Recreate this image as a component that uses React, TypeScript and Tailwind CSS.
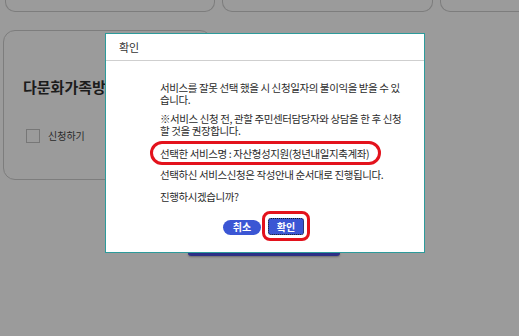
const font = { fontFamily: '"Noto Sans CJK KR", "Noto Sans", sans-serif' };

export default function App() {
  return (
    <div
      className="relative w-[519px] h-[336px] overflow-hidden bg-[#9b9b9b] text-[#333]"
      style={font}
    >
      {/* background page (dimmed) */}
      <div className="flex gap-[7px] pl-[5px]">
        <div className="w-[210px] h-[12px] border-x border-b border-[#7d7d7d] rounded-b-[10px]" />
        <div className="w-[211px] h-[12px] border-x border-b border-[#7d7d7d] rounded-b-[10px]" />
        <div className="flex-1 h-[12px] border-l border-b border-[#7d7d7d] rounded-bl-[10px]" />
      </div>
      <div className="ml-[3px] mt-[18px] w-[209px] h-[150px] border border-[#7d7d7d] rounded-[12px] pl-[19px] pt-[47px]">
        <div className="text-[15px] font-bold text-[#1c1c1c] leading-[18px]">다문화가족방</div>
        <div className="flex items-center gap-[8px] mt-[32px] pl-[3px]">
          <div className="w-[14px] h-[14px] border border-[#777]" />
          <span className="text-[10px] text-[#2a2a2a]">신청하기</span>
        </div>
      </div>
      <div className="absolute left-[188px] top-[252px] w-[152px] h-[4px] bg-[#2d2f86] rounded-b-[3px] shadow-[0_1px_2px_rgba(0,0,0,0.3)]" />

      {/* confirm modal */}
      <div className="absolute left-[105px] top-[33px] w-[320px] h-[220px] bg-white border border-[#2c9b9b] flex flex-col">
        <div className="h-[27px] border-b border-[#cfcfcf] flex items-center pl-[13px] text-[11px] text-[#333]">
          확인
        </div>
        <div className="pl-[54px] pt-[21px] text-[10.5px] leading-[12px] tracking-[-0.4px] text-[#2b2b2b] flex flex-col">
          <p className="whitespace-nowrap">
            서비스를 잘못 선택 했을 시 신청일자의 불이익을 받을 수 있<br />습니다.
          </p>
          <p className="whitespace-nowrap mt-[7px]">
            ※서비스 신청 전, 관할 주민센터담당자와 상담을 한 후 신청<br />할 것을 권장합니다.
          </p>
          <div className="relative mt-[11px] whitespace-nowrap">
            선택한 서비스명 : 자산형성지원(청년내일지축계좌)
            <span className="absolute left-[-10px] top-[-7px] w-[231px] h-[24px] border-[3px] border-[#e3121c] rounded-full" />
          </div>
          <p className="whitespace-nowrap mt-[9px]">선택하신 서비스신청은 작성안내 순서대로 진행됩니다.</p>
          <p className="whitespace-nowrap mt-[10px]">진행하시겠습니까?</p>
        </div>
        <div className="flex justify-center items-center gap-[7px] mt-[16px] pr-[3px]">
          <button className="w-[38px] h-[15px] rounded-full bg-[#3b56d4] text-white text-[10px] font-bold leading-none flex items-center justify-center">
            취소
          </button>
          <div className="relative -mt-[1px]">
            <button className="w-[36px] h-[17px] rounded-[3px] bg-[#3b56d4] border border-dotted border-[#1a1a1a] text-white text-[10px] font-bold leading-none flex items-center justify-center">
              확인
            </button>
            <span className="absolute left-[-6px] top-[-7px] w-[48px] h-[30px] border-[3px] border-[#e3121c] rounded-[8px]" />
          </div>
        </div>
      </div>
    </div>
  );
}
